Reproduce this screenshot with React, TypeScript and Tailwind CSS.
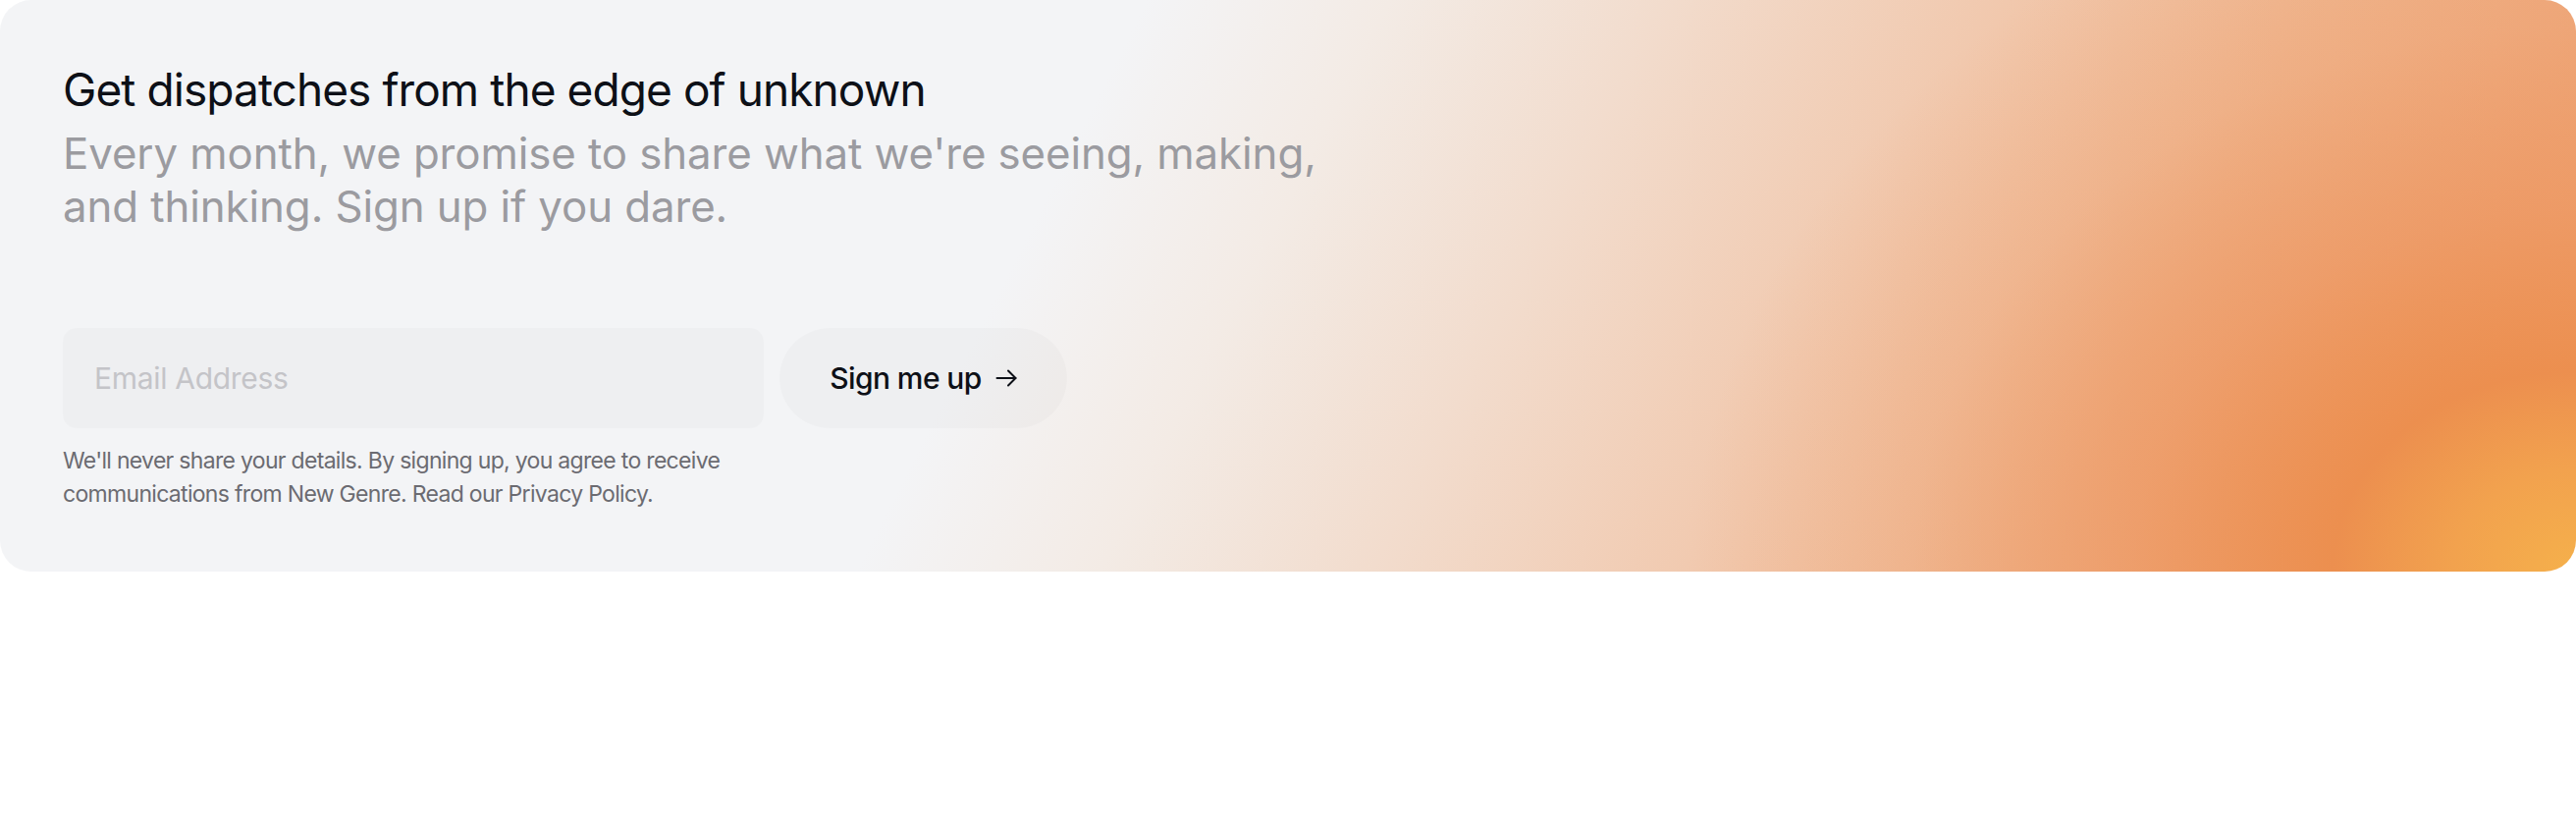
import React from 'react';

const ArrowRight: React.FC = () => (
    <svg width="22" height="18" viewBox="0 0 22 18" fill="none" stroke="currentColor" strokeWidth="2" strokeLinecap="round" strokeLinejoin="round">
        <path d="M1.5 9h19" />
        <path d="M13 1.5 20.5 9 13 16.5" />
    </svg>
);

export default function App() {
    return (
        <div className="min-h-screen bg-white font-['Inter','Liberation_Sans',sans-serif]">
            <section className="rounded-[32px] px-16 pt-16 pb-[62px] bg-[radial-gradient(ellipse_900px_740px_at_100%_100%,#f5b04b_0%,#f2a24e_14%,#ec8f4f_27.5%,rgba(237,150,95,0.7)_50%,rgba(238,160,110,0.3)_75%,rgba(238,165,120,0)_100%),linear-gradient(117deg,#f3f4f6_40%,#f3ebe5_48.5%,#f2dccd_58%,#f1c8ad_70%,#efb58e_81%,#eea77a_91%,#ee9f6e_100%)]">
                <h2 className="text-[46px] leading-[55px] font-normal tracking-[-0.02em] text-[#0d1017]">
                    Get dispatches from the edge of unknown
                </h2>
                <p className="mt-[11px] max-w-[1320px] text-[43.8px] leading-[54px] tracking-[-0.002em] text-[#9b9ba0]">
                    Every month, we promise to share what we're seeing, making, and thinking. Sign up if you dare.
                </p>

                <form className="mt-24 flex items-center gap-4" onSubmit={(e) => e.preventDefault()}>
                    <input
                        type="email"
                        placeholder="Email Address"
                        className="w-[714px] h-[102px] rounded-[14px] bg-black/[0.02] px-8 text-[30px] tracking-[-0.01em] text-[#0d1017] placeholder:text-[#c4c4c8] outline-none"
                    />
                    <button
                        type="submit"
                        className="h-[102px] w-[293px] rounded-full bg-black/[0.02] flex items-center justify-center gap-[14px] text-[30px] font-medium tracking-[-0.02em] text-[#0d1017]"
                    >
                        Sign me up
                        <ArrowRight />
                    </button>
                </form>

                <p className="mt-4 max-w-[700px] text-[23px] leading-[34px] tracking-[-0.03em] text-[#6b6b71]">
                    We'll never share your details. By signing up, you agree to receive communications from New Genre. Read our Privacy Policy.
                </p>
            </section>
        </div>
    );
}
